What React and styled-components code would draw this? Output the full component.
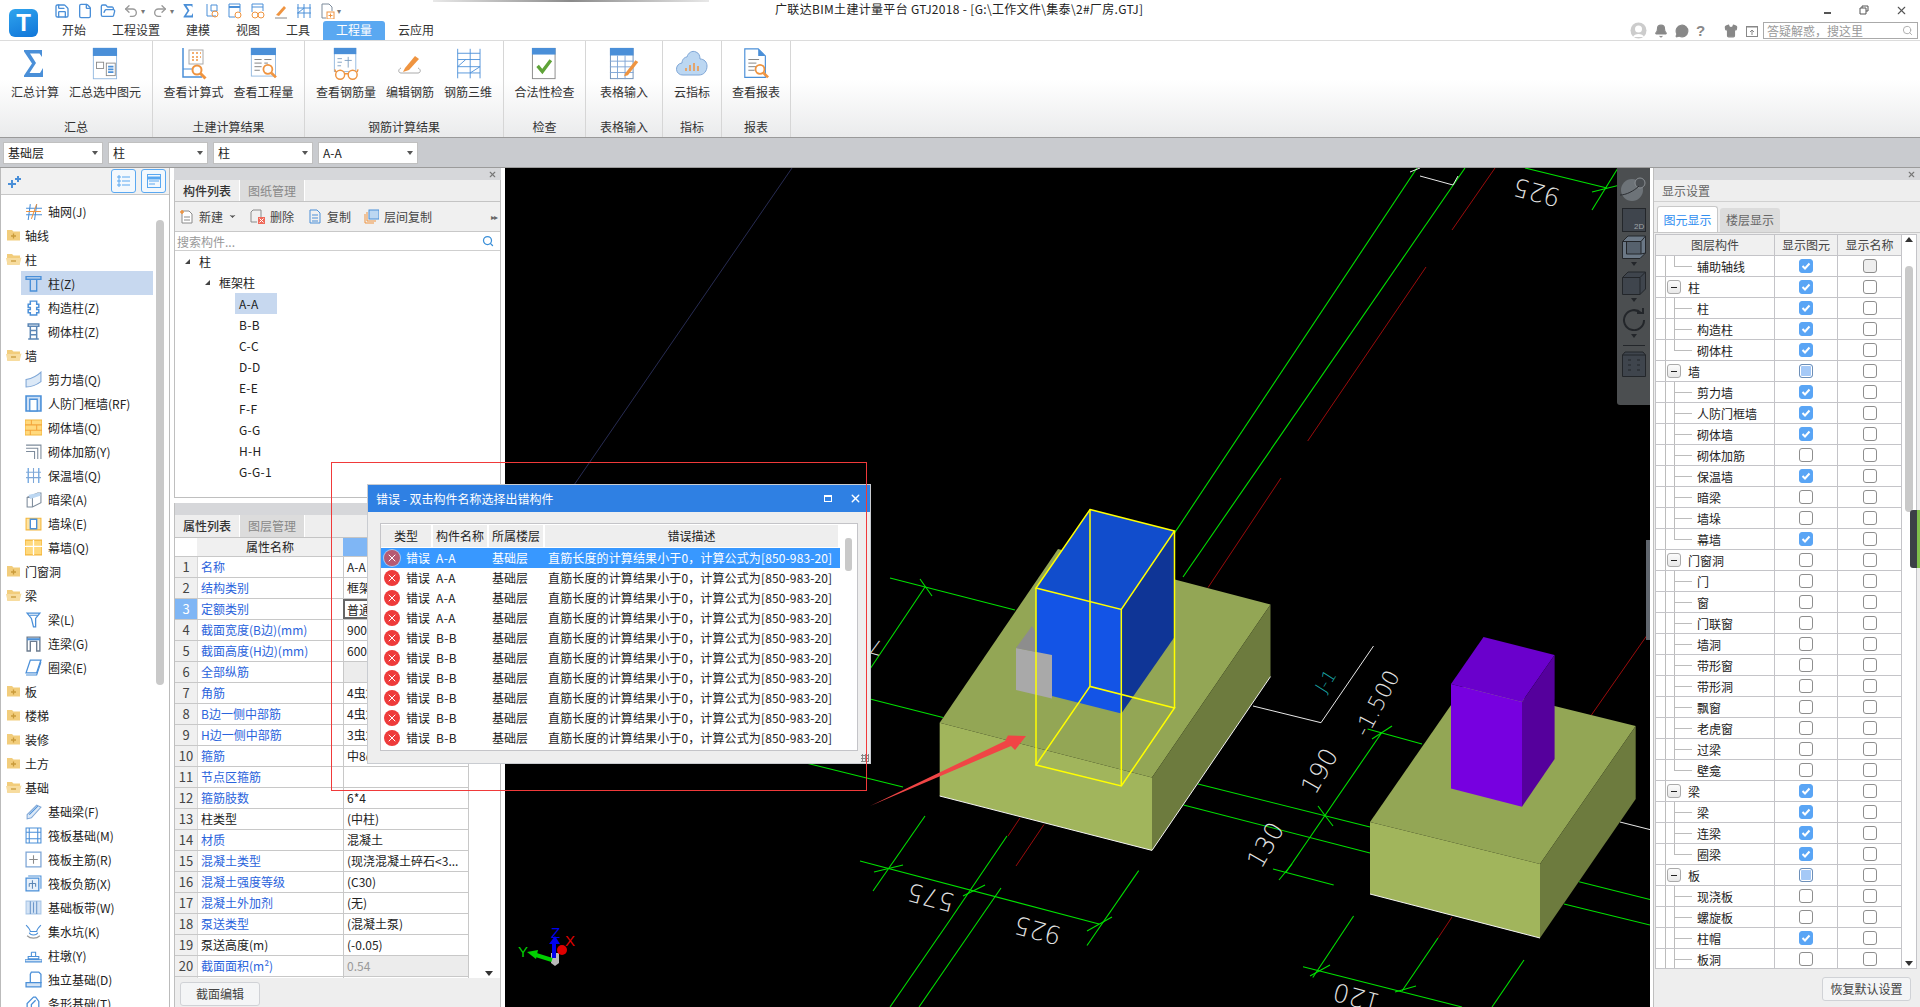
import styled, { createGlobalStyle } from "styled-components";
import {
  Save, File, FolderOpen, Undo2, Redo2, Bell, MessageCircle, Shirt, Search, X, ChevronDown,
} from "lucide-react";

const FONT = `"Noto Sans CJK SC", "Noto Sans", sans-serif`;
const BLUE = "#4a8fd8";
const ORANGE = "#ef9440";

const Global = createGlobalStyle`
  html, body { margin: 0; padding: 0; background: #fff; }
  * { box-sizing: border-box; }
`;

const Page = styled.div`
  position: relative;
  width: 1920px;
  height: 1007px;
  overflow: hidden;
  display: flex;
  flex-direction: column;
  font-family: ${FONT};
  font-size: 12px;
  color: #222;
  background: #fff;
`;
const TopShade = styled.div`
  position: absolute;
  left: 433px;
  top: 0;
  width: 276px;
  height: 2px;
  background: linear-gradient(90deg, #e8e8e8, #8a8a8a 50%, #e8e8e8);
`;

/* ---------- title bar ---------- */
const TitleBar = styled.div`
  height: 41px;
  display: flex;
  border-bottom: 1px solid #dcdcdc;
  flex-shrink: 0;
`;
const LogoBox = styled.div`
  width: 45px;
  padding: 9px 0 0 9px;
`;
const Logo = styled.div`
  width: 29px;
  height: 28px;
  border-radius: 6px;
  background: linear-gradient(160deg, #2fa4ee, #1075d8);
  color: #fff;
  font: 900 24px/28px "Liberation Sans", sans-serif;
  text-align: center;
`;
const TitleCol = styled.div`
  flex: 1;
  display: flex;
  flex-direction: column;
`;
const QatRow = styled.div`
  height: 21px;
  display: flex;
  align-items: center;
  padding-left: 9px;
  gap: 7px;
  color: ${BLUE};
`;
const QatCaret = styled.span`
  color: #777;
  font-size: 8px;
  margin-left: -5px;
`;
const TitleText = styled.div`
  position: absolute;
  top: 0;
  left: 775px;
  line-height: 18px;
  letter-spacing: 0.32px;
  white-space: nowrap;
  color: #222;
`;
const WinControls = styled.div`
  position: absolute;
  top: 0;
  right: 12px;
  display: flex;
  align-items: center;
  height: 20px;
  gap: 26px;
  color: #555;
`;
const TabRow = styled.div`
  flex: 1;
  display: flex;
  align-items: stretch;
  padding-left: 4px;
`;
const MenuTab = styled.div`
  padding: 0 13px;
  line-height: 18px;
  font-size: 12px;
  border-radius: 3px 3px 0 0;
  background: ${(p) => (p.$active ? "#5aa8f1" : "transparent")};
  color: ${(p) => (p.$active ? "#fff" : "#333")};
`;
const UserArea = styled.div`
  margin-left: auto;
  display: flex;
  align-items: center;
  gap: 7px;
  color: #999;
  padding-right: 2px;
  height: 19px;
`;
const QMark = styled.span`
  width: 7px;
  font: 700 15px/17px "Liberation Sans", sans-serif;
  color: #888;
`;
const SearchBox = styled.div`
  width: 155px;
  height: 17px;
  border: 1px solid #aaa;
  display: flex;
  align-items: center;
  justify-content: space-between;
  padding: 0 4px 0 3px;
  color: #999;
  line-height: 15px;
  margin-left: -3px;
`;

/* ---------- ribbon ---------- */
const Ribbon = styled.div`
  height: 97px;
  display: flex;
  flex-shrink: 0;
  background: linear-gradient(#fff 0%, #fff 40%, #eaebec 100%);
  border-bottom: 1px solid #9a9a9a;
`;
const RibbonGroup = styled.div`
  width: ${(p) => p.$w}px;
  display: flex;
  flex-direction: column;
  border-right: 1px solid #d6d6d6;
`;
const RibbonBtns = styled.div`
  height: 76px;
  display: flex;
  justify-content: center;
  gap: 10px;
  padding-top: 6px;
`;
const RibbonBtn = styled.div`
  display: flex;
  flex-direction: column;
  align-items: center;
  white-space: nowrap;
  color: #333;
`;
const RibbonIcon = styled.div`
  height: 34px;
  margin-bottom: 2px;
  svg { display: block; height: 34px; width: auto; }
`;
const GroupLabel = styled.div`
  text-align: center;
  line-height: 20px;
  color: #333;
`;

/* ---------- combo row ---------- */
const ComboBar = styled.div`
  height: 30px;
  flex-shrink: 0;
  display: flex;
  align-items: center;
  gap: 5px;
  padding: 0 0 0 3px;
  background: #c9cbcf;
  border-bottom: 1px solid #9b9b9b;
`;
const Combo = styled.div`
  width: 100px;
  height: 22px;
  display: flex;
  align-items: center;
  justify-content: space-between;
  padding: 0 4px;
  background: #fff;
  border: 1px solid #c0c0c0;
`;
const ComboArrow = styled.span`
  width: 0;
  height: 0;
  border-left: 3px solid transparent;
  border-right: 3px solid transparent;
  border-top: 4px solid #555;
`;

/* ---------- main area ---------- */
const Main = styled.div`
  flex: 1;
  display: flex;
  min-height: 0;
`;

/* left nav */
const NavPanel = styled.div`
  width: 170px;
  flex-shrink: 0;
  display: flex;
  flex-direction: column;
  border-left: 1px solid #bbb;
  border-right: 1px solid #bbb;
`;
const NavHeader = styled.div`
  height: 27px;
  flex-shrink: 0;
  display: flex;
  align-items: center;
  justify-content: space-between;
  background: #f1f1f1;
  border-bottom: 1px solid #c8c8c8;
  padding: 0 3px 0 6px;
`;
const NavBtnGroup = styled.div`
  display: flex;
  gap: 5px;
`;
const NavBtn = styled.div`
  width: 25px;
  height: 24px;
  border: 1px solid #5aa8f1;
  border-radius: 3px;
  background: #f3f8fd;
  display: flex;
  align-items: center;
  justify-content: center;
`;
const NavBody = styled.div`
  flex: 1;
  display: flex;
  padding-top: 4px;
  min-height: 0;
  overflow: hidden;
`;
const NavList = styled.div`
  width: 155px;
`;
const NavRow = styled.div`
  height: 24px;
  display: flex;
  align-items: center;
  white-space: nowrap;
  margin: 0 ${(p) => (p.$child ? "3px" : "0")} 0 ${(p) => (p.$child ? "20px" : "0")};
  padding-left: ${(p) => (p.$child ? "4px" : "5px")};
  gap: ${(p) => (p.$child ? "6px" : "3px")};
  background: ${(p) => (p.$selected ? "#c7d8ef" : "transparent")};
`;
const NavScroll = styled.div`
  width: 8px;
  height: 465px;
  margin-top: 21px;
  border-radius: 4px;
  background: #c9c9c9;
`;

/* middle column */
const MidCol = styled.div`
  width: 327px;
  margin: 0 4px;
  flex-shrink: 0;
  display: flex;
  flex-direction: column;
`;
const DockBar = styled.div`
  height: 12px;
  flex-shrink: 0;
  display: flex;
  align-items: center;
  justify-content: flex-end;
  padding-right: 4px;
  background: #d6d7da;
  color: #777;
`;
const PanelTop = styled.div`
  height: 318px;
  flex-shrink: 0;
  display: flex;
  flex-direction: column;
  border: 1px solid #bfbfbf;
  border-top: 0;
`;
const PanelBottom = styled.div`
  flex: 1;
  margin-top: 5px;
  min-height: 0;
  display: flex;
  flex-direction: column;
  border-left: 1px solid #bfbfbf;
  border-right: 1px solid #bfbfbf;
`;
const TabStrip = styled.div`
  height: ${(p) => p.$h || 22}px;
  flex-shrink: 0;
  display: flex;
  background: #eeeeee;
  border-bottom: 1px solid #c4c4c4;
`;
const PanelTab = styled.div`
  width: 65px;
  text-align: center;
  line-height: 21px;
  font-weight: ${(p) => (p.$active ? 500 : 400)};
  color: ${(p) => (p.$active ? "#333" : "#888")};
  background: ${(p) => (p.$active ? "#eeeeee" : "#dcdcdc")};
  border-right: 1px solid #fff;
`;
const ListToolbar = styled.div`
  height: 30px;
  flex-shrink: 0;
  display: flex;
  align-items: center;
  padding-left: 4px;
  background: #f0f0f0;
  border-bottom: 1px solid #c8c8c8;
`;
const ToolBtn = styled.div`
  display: flex;
  align-items: center;
  gap: 5px;
  margin-right: 13px;
  color: #444;
`;
const ToolMore = styled.span`
  margin-left: auto;
  margin-right: 3px;
  color: #666;
  font-size: 8px;
  letter-spacing: -1px;
`;
const SearchRow = styled.div`
  height: 19px;
  flex-shrink: 0;
  display: flex;
  align-items: center;
  justify-content: space-between;
  padding: 0 6px 0 2px;
  color: #999;
  border-bottom: 1px solid #cfcfcf;
`;
const TreeBody = styled.div`
  flex: 1;
`;
const TreeRow = styled.div`
  height: 21px;
  line-height: 21px;
  display: flex;
  align-items: center;
  padding-left: ${(p) => p.$indent}px;
`;
const TreeCaret = styled.span`
  width: 0;
  height: 0;
  margin-right: 9px;
  border-left: 5px solid transparent;
  border-bottom: 5px solid #444;
`;
const TreeLeaf = styled.span`
  padding: 0 5px 0 4px;
  min-width: 42px;
  white-space: nowrap;
  font-size: 12px;
  letter-spacing: 0.3px;
  background: ${(p) => (p.$selected ? "#c7d8ef" : "transparent")};
`;

const PropHead = styled.div`
  height: 19px;
  flex-shrink: 0;
  display: grid;
  grid-template-columns: 22px 146px 126px;
  background: #fff;
  border-bottom: 1px solid #c8c8c8;
`;
const PropHeadCell = styled.div`
  text-align: center;
  line-height: 18px;
  background: ${(p) => (p.$sel ? "#7fb6f5" : "#f0f0f0")};
  ${(p) => p.$blank && "background: #fff;"}
`;
const PropBody = styled.div`
  flex: 1;
  min-height: 0;
  overflow: hidden;
`;
const PropRow = styled.div`
  height: 21px;
  width: 294px;
  display: grid;
  grid-template-columns: 22px 146px 126px;
  border-bottom: 1px solid #c8c8c8;
`;
const PropNo = styled.div`
  text-align: center;
  line-height: 20px;
  font-size: 13px;
  background: ${(p) => (p.$sel ? "#7fb6f5" : "#f0f0f0")};
  color: ${(p) => (p.$sel ? "#fff" : "#444")};
`;
const PropName = styled.div`
  padding-left: 3px;
  line-height: 20px;
  white-space: nowrap;
  color: ${(p) => (p.$plain ? "#222" : "#2a63dc")};
  border-left: 1px solid #d8d8d8;
`;
const PropValue = styled.div`
  padding-left: 3px;
  line-height: ${(p) => (p.$sel ? "17px" : "20px")};
  white-space: nowrap;
  overflow: hidden;
  border-left: 1px solid #c8c8c8;
  border-right: 1px solid #c8c8c8;
  background: ${(p) => (p.$fill ? "#ececec" : "#fff")};
  color: ${(p) => (p.$muted ? "#999" : "#222")};
  ${(p) => p.$sel && "border: 2px solid #666; padding-left: 2px;"}
`;
const PropFoot = styled.div`
  height: 29px;
  flex-shrink: 0;
  background: #eeeeee;
  padding: 4px 0 0 5px;
`;
const GhostBtn = styled.div`
  width: ${(p) => p.$w}px;
  height: 24px;
  background: #f4f5f6;
  border: 1px solid #d0d2d6;
  border-radius: 3px;
  text-align: center;
  line-height: 22px;
  color: #444;
`;
const ScrollArrow = styled.div`
  position: absolute;
  left: ${(p) => p.$x}px;
  top: ${(p) => p.$y}px;
  width: 0;
  height: 0;
  border-left: 4px solid transparent;
  border-right: 4px solid transparent;
  ${(p) => (p.$up ? "border-bottom: 5px solid #333;" : "border-top: 5px solid #333;")}
`;

/* viewport */
const Viewport = styled.div`
  position: relative;
  flex: 1;
  min-width: 0;
  background: #000;
  svg.scene { display: block; }
`;
const FloatBar = styled.div`
  position: absolute;
  top: 0;
  right: 0;
  width: 33px;
  height: 237px;
  background: #4b4e50;
  border-radius: 0 0 0 3px;
  display: flex;
  flex-direction: column;
  align-items: center;
  padding-top: 5px;
  gap: 3px;
`;
const FloatArrow = styled.div`
  width: 0;
  height: 0;
  margin: 0 0 2px;
  border-left: 3px solid transparent;
  border-right: 3px solid transparent;
  border-top: 4px solid #23262a;
`;
const FloatRule = styled.div`
  width: 22px;
  height: 1px;
  background: #23262a;
  margin: 2px 0;
`;
const Splitter = styled.div`
  position: absolute;
  right: 0;
  top: 372px;
  width: 4px;
  height: 100px;
  background: #60666e;
`;

/* right panel */
const RightPanel = styled.div`
  width: 267px;
  flex-shrink: 0;
  margin-left: 3px;
  display: flex;
  flex-direction: column;
  background: #eeeeee;
  border-left: 1px solid #bfbfbf;
`;
const RightTitle = styled.div`
  height: 22px;
  flex-shrink: 0;
  padding-left: 8px;
  line-height: 21px;
  color: #666;
  border-bottom: 1px solid #d0d0d0;
`;
const RightTabs = styled.div`
  height: 31px;
  flex-shrink: 0;
  padding: 4px 0 0 3px;
  display: flex;
  gap: 2px;
  border-bottom: 1px solid #c8c8c8;
`;
const RightTab = styled.div`
  width: ${(p) => (p.$active ? 61 : 60)}px;
  text-align: center;
  line-height: ${(p) => (p.$active ? "26px" : "24px")};
  margin-top: ${(p) => (p.$active ? 0 : "2px")};
  border-radius: 3px 3px 0 0;
  background: ${(p) => (p.$active ? "#fff" : "#dcdcdc")};
  color: ${(p) => (p.$active ? "#2f8ef0" : "#666")};
  ${(p) => p.$active && "border: 1px solid #c8c8c8; border-bottom: 0;"}
`;
const LayerBox = styled.div`
  height: 735px;
  flex-shrink: 0;
  margin: 1px 3px 0 1px;
  background: #fff;
  border: 1px solid #c4c4c8;
  display: flex;
  overflow: hidden;
`;
const LayerTable = styled.div`
  width: 246px;
  flex-shrink: 0;
`;
const LayerHead = styled.div`
  height: 21px;
  display: grid;
  grid-template-columns: 119px 63px 64px;
  background: #f0f0f0;
  border-bottom: 1px solid #c4c4c8;
`;
const LayerHeadCell = styled.div`
  text-align: center;
  line-height: 20px;
  color: #444;
  border-right: 1px solid #c4c4c8;
`;
const LayerRow = styled.div`
  height: 21px;
  display: grid;
  grid-template-columns: 119px 63px 64px;
  border-bottom: 1px solid #c4c4c8;
`;
const lines = (p) => {
  const c = "#bcbcbc";
  const g = `linear-gradient(${c},${c})`;
  const outer = `${g} 9px 0/1px 100% no-repeat`;
  if (p.$group) return `${outer}`;
  const inner = `${g} 18px 0/1px ${p.$last ? "10px" : "100%"} no-repeat`;
  const arm = `${g} 18px 10px/18px 1px no-repeat`;
  return `${outer}, ${inner}, ${arm}`;
};
const LayerName = styled.div`
  display: flex;
  align-items: center;
  padding-left: ${(p) => (p.$group ? "11px" : "41px")};
  gap: 7px;
  background: ${lines};
  color: #222;
  border-right: 1px solid #c4c4c8;
`;
const Minus = styled.span`
  width: 14px;
  height: 14px;
  border: 1px solid #aaa;
  border-radius: 3px;
  background: linear-gradient(#fbfbfb, #e8e8e8);
  display: flex;
  align-items: center;
  justify-content: center;
  &::before { content: ""; width: 6px; height: 1px; background: #222; }
`;
const CheckCell = styled.div`
  display: flex;
  align-items: center;
  justify-content: center;
  border-right: 1px solid #c4c4c8;
`;
const Check = styled.span`
  width: 14px;
  height: 14px;
  border-radius: 3px;
  display: flex;
  align-items: center;
  justify-content: center;
  border: 1px solid ${(p) => (p.$state === "on" ? "#5aa5f5" : "#8e8e8e")};
  background: ${(p) => (p.$state === "on" ? "#5aa5f5" : p.$state === "off-dim" ? "#eeeeee" : "#fff")};
  ${(p) => p.$state === "part" && "box-shadow: inset 0 0 0 1px #fff; background: #a5c9f7; border-color: #6d8fb8;"}
`;
const LayerScroll = styled.div`
  flex: 1;
  position: relative;
`;
const LayerThumb = styled.div`
  width: 8px;
  height: 246px;
  margin: 31px 0 0 3px;
  border-radius: 4px;
  background: #c9c9c9;
`;
const RightFoot = styled.div`
  flex: 1;
  display: flex;
  justify-content: flex-end;
  padding: 8px 9px 0 0;
`;
const Meter = styled.div`
  position: absolute;
  right: 0;
  top: 510px;
  width: 10px;
  height: 58px;
  background: #3c4046;
  border-radius: 3px 0 0 3px;
  border-right: 3px solid #7fbf4a;
`;

/* error dialog */
const Dialog = styled.div`
  position: absolute;
  left: 368px;
  top: 485px;
  width: 502px;
  height: 278px;
  background: #eeeeee;
  box-shadow: 0 0 0 1px #c9ccd1;
  display: flex;
  flex-direction: column;
`;
const DialogTitle = styled.div`
  height: 27px;
  flex-shrink: 0;
  display: flex;
  align-items: center;
  justify-content: space-between;
  padding: 0 8px;
  background: #2f80e3;
  color: #fff;
`;
const DialogActions = styled.div`
  display: flex;
  align-items: center;
  gap: 17px;
`;
const Maxi = styled.span`
  width: 8px;
  height: 7px;
  border: 1px solid #fff;
  border-top-width: 2px;
`;
const ErrorBox = styled.div`
  margin: 11px 12px 0;
  height: 228px;
  background: #fff;
  border: 1px solid #c4c4c8;
  display: flex;
`;
const ErrorTable = styled.div`
  width: 459px;
  flex-shrink: 0;
`;
const ErrorGrid = styled.div`
  display: grid;
  grid-template-columns: 52px 56px 56px 295px;
`;
const ErrorHead = styled(ErrorGrid)`
  height: 24px;
  padding: 1px 0 1px;
`;
const ErrorHeadCell = styled.div`
  background: #eeeeee;
  margin-right: 2px;
  text-align: center;
  line-height: 22px;
  color: #222;
`;
const ErrorRow = styled(ErrorGrid)`
  height: 20px;
  line-height: 20px;
  white-space: nowrap;
  background: ${(p) => (p.$selected ? "#3898ff" : "#fff")};
  color: ${(p) => (p.$selected ? "#fff" : "#222")};
`;
const ErrType = styled.div`
  display: flex;
  align-items: center;
  gap: 6px;
  padding-left: 3px;
`;
const ErrDot = styled.span`
  width: 16px;
  height: 16px;
  border-radius: 50%;
  flex-shrink: 0;
  display: flex;
  align-items: center;
  justify-content: center;
  color: #fff;
  background: ${(p) => (p.$selected ? "#b65a72" : "#ee3b3b")};
  ${(p) => p.$selected && "box-shadow: 0 0 0 1px #a8c8ee;"}
`;
const ErrName = styled.div`
  padding-left: 3px;
  letter-spacing: 0.4px;
`;
const ErrFloor = styled.div`
  padding-left: 3px;
`;
const ErrDesc = styled.div`
  padding-left: 3px;
  letter-spacing: 0.13px;
`;
const ErrScroll = styled.div`
  flex: 1;
  padding: 14px 0 0 5px;
`;
const ErrThumb = styled.div`
  width: 7px;
  height: 33px;
  border-radius: 3px;
  background: #c9c9c9;
`;
const Grip = styled.div`
  position: absolute;
  right: 1px;
  bottom: 1px;
  width: 8px;
  height: 8px;
  background: radial-gradient(circle, #888 1px, transparent 1.2px) 0 0 / 3px 3px;
`;
const RedFrame = styled.div`
  position: absolute;
  left: 331px;
  top: 462px;
  width: 536px;
  height: 329px;
  border: 1px solid #f03a3a;
  pointer-events: none;
`;

/* ---------- icons ---------- */
const Svg = ({ s = 16, w, h, vb, sw = 1, stroke = BLUE, children, className }) => (
  <svg
    className={className}
    width={w || s}
    height={h || s}
    viewBox={vb || `0 0 ${w || s} ${h || s}`}
    fill="none"
    stroke={stroke}
    strokeWidth={sw}
  >
    {children}
  </svg>
);

const SigmaPath = ({ c = BLUE }) => <path d="M3 2H21V9L18.5 5.5H9L15 15L8.5 25H19L22 20V29H3V27.5L11 15.5L3 3.5Z" fill={c} stroke="none" />;

const Mag = ({ x, y, r = 5, c = ORANGE }) => (
  <g stroke={c} strokeWidth="2" fill="none">
    <circle cx={x} cy={y} r={r} />
    <path d={`M${x + r - 1} ${y + r - 1}l5 5`} strokeWidth="3" />
  </g>
);

const Rib = {
  sigma: () => <Svg w={28} h={34} vb="0 -1 28 34"><SigmaPath /></Svg>,
  select: () => (
    <Svg w={30} h={38} vb="0 0 30 38">
      <rect x="1.5" y="1.5" width="26" height="34" fill="#fff" stroke="#8fb6de" />
      <rect x="1" y="1" width="27" height="9" fill={BLUE} stroke="none" />
      <rect x="5" y="17" width="8" height="7" stroke="#888" />
      <rect x="16" y="18" width="10" height="14" fill="#fff" stroke="#888" />
      <path d="M18 22h6M18 25h6M18 28h6" stroke="#4a8fd8" strokeWidth="2" />
    </Svg>
  ),
  formula: () => (
    <Svg w={30} h={34} vb="0 0 30 34">
      <path d="M5 1V30H24" stroke={BLUE} strokeWidth="1.5" />
      <path d="M5 22H15" stroke={BLUE} />
      <rect x="11" y="3" width="14" height="14" stroke="#aaa" />
      <path d="M14 6h2M18 6h2M22 6h1M14 10h2M18 10h2M22 10h1M14 13h2M18 13h2" stroke={ORANGE} strokeWidth="1.5" />
      <Mag x={19} y={23} r={4.5} />
    </Svg>
  ),
  qty: () => (
    <Svg w={30} h={38} vb="0 0 30 38">
      <rect x="1.5" y="1.5" width="27" height="31" fill="#fff" stroke="#8fb6de" />
      <rect x="1" y="1" width="28" height="8" fill={BLUE} stroke="none" />
      <path d="M5 14h8M5 18h8M5 22h8M5 26h6M16 14h8M16 18h4" stroke="#777" />
      <Mag x={20} y={25} r={5} />
    </Svg>
  ),
  rebar: () => (
    <Svg w={30} h={38} vb="0 0 30 38">
      <rect x="1.5" y="1.5" width="24" height="26" fill="#fff" stroke="#8fb6de" />
      <rect x="1" y="1" width="25" height="7" fill={BLUE} stroke="none" />
      <path d="M5 13h5M5 17h5M5 21h4M17 11V23M13 15H21" stroke="#7b9cbf" />
      <g stroke={ORANGE} strokeWidth="1.6">
        <circle cx="8" cy="31" r="5" fill="#fff" />
        <circle cx="22" cy="31" r="5" fill="#fff" />
        <path d="M13 30h4M2 25l1 3M28 25l-1 3" />
      </g>
    </Svg>
  ),
  edit: () => (
    <Svg w={30} h={34} vb="0 0 30 34">
      <path d="M6 21c-3 1-3 5 0 5h17c3 0 3-4 0-5" stroke="#aaa" />
      <path d="M10 21l10-12 4 3-10 11-6 2z" fill={ORANGE} stroke="none" />
    </Svg>
  ),
  frame: () => (
    <Svg w={30} h={38} vb="0 0 30 38" stroke={BLUE}>
      <path d="M3 2V35M17 2V35M28 2V35M3 7H28M3 14H28M3 22H28M3 29H28M3 22L12 14M17 29L28 22" />
    </Svg>
  ),
  check: () => (
    <Svg w={28} h={36} vb="0 0 28 36">
      <rect x="1.5" y="1.5" width="24" height="32" fill="#fff" stroke="#8a8a8a" />
      <rect x="1" y="1" width="25" height="7" fill={BLUE} stroke="none" />
      <path d="M7 20l5 6 9-12" stroke="#5fa338" strokeWidth="3.5" />
    </Svg>
  ),
  table: () => (
    <Svg w={32} h={36} vb="0 0 32 36">
      <rect x="1.5" y="1.5" width="24" height="32" fill="#fff" stroke="#6d8fb8" />
      <rect x="1" y="1" width="25" height="8" fill={BLUE} stroke="none" />
      <path d="M1 15H26M1 21H26M1 27H26M9 9V34M17 9V34" stroke="#7fa6d6" />
      <path d="M17 28l11-14 3 2-11 14-4 1z" fill={ORANGE} stroke="none" />
    </Svg>
  ),
  cloud: () => (
    <Svg w={34} h={34} vb="0 0 34 34">
      <path d="M8 28a6 6 0 0 1-1-12c0-4 3-6 5-6 1-4 5-7 9-5 3 1 4 4 4 7 4 0 7 3 7 7 0 5-3 9-8 9z" fill="#bcd7f2" stroke="#7fa6d6" />
      <path d="M11 24v-3M15 24v-6M19 24v-8M23 24v-5" stroke={ORANGE} strokeWidth="1.5" />
    </Svg>
  ),
  report: () => (
    <Svg w={30} h={38} vb="0 0 30 38">
      <path d="M2 2H17L25 10V34H2Z" fill="#fff" stroke={BLUE} strokeWidth="1.3" />
      <path d="M17 2V10H25Z" fill={BLUE} stroke="none" />
      <path d="M6 14h12M6 18h9M6 22h9M6 26h7" stroke="#777" />
      <Mag x={19} y={25} r={5} />
    </Svg>
  ),
};

const p = (d, c, sw = 1, f = "none") => <path d={d} stroke={c} strokeWidth={sw} fill={f} />;
const NAV_ICONS = {
  grid: <>{p("M1 5H16M1 11H16M5 1L3 16M11 1L9 16", BLUE)}{p("M1 8H15M11 1L6 15", ORANGE)}</>,
  column: <>{p("M1 1.5H15V4H1ZM5 4V15H11V4", BLUE, 1.3)}</>,
  gz: <>{p("M5 2H11V5H13V8H11V10H13V13H11V15H5V13H3V10H5V8H3V5H5Z", BLUE, 1.4)}</>,
  brickcol: <>{p("M3 1H13V3H3ZM5 3V15H11V3M5 7H11M5 11H11M3 15H13", "#5b86b5", 1.4)}</>,
  shear: <>{p("M1 8C6 7 11 5 15 1V10C11 13 6 15 1 15Z", "#7ea6d6", 1, "#dce9f7")}</>,
  door: <>{p("M1 1H15V15H1Z", BLUE, 1.5, "#cfe1f6")}{p("M4.5 4H11.5V15H4.5Z", BLUE, 1.2, "#fff")}</>,
  brick: <>{p("M0 1H16V15H0Z", "#f4b63b", 1, "#ffd97d")}{p("M0 5.5H16M0 10.5H16M6 1V5.5M11 5.5V10.5M5 10.5V15", "#f4a53b")}</>,
  rebar: <>{p("M1 2H15V15M1 5H12V15M1 8H9V15", "#7d8b9b")}</>,
  insu: <>{p("M3 1V15M13 1V15", BLUE)}{p("M8 1V15M1 5H15M1 10H15", "#7ea6d6", 1)}</>,
  hidden: <>{p("M2 6L12 2H15V11L7 15H2Z", "#7d8b9b")}{p("M2 6H7V15M7 6L15 2", "#7d8b9b")}{p("M4 4L14 2V4L5 7Z", "#bcd7f2", 1, "#bcd7f2")}</>,
  pier: <>{p("M1 3H15V14H1Z", "#f4b63b", 1, "#ffe4a3")}{p("M5 4H11V13H5Z", BLUE, 1.3, "#fff")}</>,
  curtain: <>{p("M0 1H16V15H0Z", "#f4b63b", 1.2, "#ffd97d")}{p("M0 7H16M8 1V15", "#fff", 1.2)}</>,
  beam: <>{p("M2 2H14L10 7V15H8L6 7Z", BLUE, 1.2)}{p("M4 4H12", BLUE)}</>,
  link: <>{p("M2 2H14V15H11V6H5V15H2Z", "#6d7d90", 1.3)}{p("M2 4H14", BLUE, 2)}</>,
  ring: <>{p("M5 1H15L11 13H1Z", BLUE, 1.2)}{p("M1 15H11L15 3", BLUE)}</>,
  fbeam: <>{p("M2 11L11 2L15 4L6 14L2 15Z", "#7ea6d6", 1, "#dce9f7")}{p("M4 11L12 3", BLUE)}</>,
  raft: <>{p("M1 1H15V15H1Z", BLUE)}{p("M4 1V15M12 1V15M1 5H15M1 11H15", BLUE)}</>,
  raftmain: <>{p("M1 1H15V15H1Z", "#7ea6d6", 1.2)}{p("M8 4V12M4 8H12", "#8a8a8a")}</>,
  raftneg: <>{p("M1 3H13V15H1Z", BLUE, 1.2, "#e7f0fa")}{p("M3 1H15V13", BLUE)}{p("M7 5V13M4 8H10M4 8V11M10 8V11", "#5b86b5")}</>,
  strip: <>{p("M1 2H15V14H1Z", "#aac7e8", 1, "#d3e3f5")}{p("M5 2V14M11 2V14M8 3V13", "#6c97c9", 1)}</>,
  pit: <>{p("M1 2C3 4 5 6 5 8H11C11 6 13 4 15 2M4 9C5 12 11 12 12 9", BLUE)}{p("M2 12C5 15 11 15 14 12", "#999")}</>,
  cap: <>{p("M6 5H10V9M6 5V9M3 9H13V11H3ZM0 12H16V14H0Z", BLUE, 1)}</>,
  iso: <>{p("M6 1H13L15 3V11H5V3Z", BLUE, 1.2)}{p("M1 11H15V15H1Z", BLUE, 1.2, "#d3e3f5")}</>,
  strip2: <>{p("M2 15V8L8 2H10L13 6V15ZM6 15V9L10 5", BLUE, 1.2)}</>,
};
const NavIcon = ({ name }) => <Svg s={17} vb="0 0 16 16">{NAV_ICONS[name]}</Svg>;
const Folder = ({ open }) => (
  <Svg s={16} vb="0 0 16 16" stroke="none">
    <path d="M1 3H6L7.5 4.5H14V13.5H1Z" fill="#f2cd7c" />
    {open ? <path d="M0 7H13L15.5 6.5L13.5 14H1.5Z" fill="#f7dc9f" /> : null}
    <path d={open ? "M5 10h5" : "M5 9h5M7.5 6.5v5"} stroke="#c99a3a" strokeWidth="1.3" />
  </Svg>
);

/* ---------- scene ---------- */
const GREEN = [
  [1417, 168, 1130, 600], [1465, 168, 1183, 577],
  [925, 587, 870, 669], [890, 578, 1015, 610], [870, 699, 943, 717.5],
  [806, 763, 903, 787], [1525, 168, 1607, 188], [1592, 192, 1620, 185], [1618, 168, 1592, 210],
  [925, 816, 873, 891], [860, 861, 1099, 924], [874, 872, 903, 865], [950, 920, 890, 1007], [1001, 888, 919, 1007],
  [1007, 836, 950, 920], [1138.7, 870.6, 1087, 945.5], [1087, 931, 1112, 917],
  [963, 896, 985, 885], [1367.6, 729, 1422, 744], [1381.5, 733, 1285.5, 873],
  [1372, 739, 1392, 726], [1198, 784, 1370, 827], [1183.5, 805, 1370, 853], [1273, 869, 1333.7, 885],
  [1325, 815.5, 1318, 806], [1325, 815.5, 1333, 826], [1279, 880, 1292, 864],
  [1579, 881.7, 1650, 899.5], [1564, 904, 1650, 925],
  [1303, 966.7, 1462, 1007], [1353.6, 916, 1312.8, 977.5], [1438, 938, 1402, 991],
  [1524, 960, 1492, 1007], [1310, 976, 1330, 965], [1395, 992, 1416, 986],
  [920, 579, 932, 596],
];
const RED = [
  [1495, 168, 1452, 230], [1426, 267, 1307.7, 441], [1281, 478, 1208, 587.6],
  [1020, 818, 1008, 836], [1044, 824.5, 1016, 866], [1452, 917, 1438, 938], [1591.4, 715, 1650, 631],
];
const WHITE = [
  [1253, 706, 1321, 722.7], [1321, 722.7, 1373.5, 646], [1620, 822, 1650, 829.6],
  [1420, 176, 1453, 185], [1453, 185, 1458, 176], [1410, 172, 1420, 168],
];
const pts = (a) => a.map((v) => v.join(",")).join(" ");

const DimText = styled.text`
  font-family: "DejaVu Sans", sans-serif;
  font-weight: 200;
  font-size: ${(p) => p.$size || 25}px;
  fill: ${(p) => p.$color || "#e4e4e4"};
`;

const Footing = ({ top, front, side }) => (
  <g>
    <polygon points={pts(top)} fill="#93a655" />
    <polygon points={pts(front)} fill="#a1b55c" />
    <polygon points={pts(side)} fill="#6d7b3e" />
  </g>
);

const Scene = () => (
  <svg className="scene" width="1145" height="839" viewBox="505 168 1145 839">
    <line x1="792" y1="168" x2="574" y2="485" stroke="#272b52" />
    {GREEN.map((l, i) => <line key={i} x1={l[0]} y1={l[1]} x2={l[2]} y2={l[3]} stroke="#00e000" strokeWidth="1.1" />)}
    {RED.map((l, i) => <line key={i} x1={l[0]} y1={l[1]} x2={l[2]} y2={l[3]} stroke="#9a0c0c" />)}
    {WHITE.map((l, i) => <line key={i} x1={l[0]} y1={l[1]} x2={l[2]} y2={l[3]} stroke="#e8e8e8" />)}

    <Footing
      top={[[1058, 549], [1270.5, 604.4], [1152, 777.5], [939.7, 722.7]]}
      front={[[939.7, 722.7], [1152, 777.5], [1152, 850.4], [939.7, 796]]}
      side={[[1152, 777.5], [1270.5, 604.4], [1270.5, 676.6], [1152, 850.4]]}
    />
    <polyline points="939.7,796 1152,850.4 1270.5,676.6" fill="none" stroke="#f4f4f4" />
    <polygon points="1090,509.6 1174.5,531 1121.3,609.4 1036,588" fill="#114dcc" />
    <polygon points="1036,588 1121.3,609.4 1121.3,713.6 1036,692" fill="#1354e6" />
    <polygon points="1121.3,609.4 1174.5,531 1174.5,637 1121.3,713.6" fill="#0f3596" />
    <polygon points="1016,648 1052,655 1052,698.5 1016,690" fill="#a9a9a9" />
    <polygon points="1016,648 1032,626 1036,633 1036,652" fill="#8d8d8d" />
    <g fill="none" stroke="#ffff00" strokeWidth="1.5">
      <polygon points="1090,509.6 1174.5,531 1121.3,609.4 1036,588" />
      <polygon points="1036,765 1121.3,786 1174.5,708 1090,686.4" />
      <path d="M1036 588V765M1121.3 609.4V786M1174.5 531V708M1090 509.6V686.4" />
    </g>

    <Footing
      top={[[1465.6, 684], [1635.7, 726], [1540, 864], [1370, 822]]}
      front={[[1370, 822], [1540, 864], [1540, 938], [1370, 894]]}
      side={[[1540, 864], [1635.7, 726], [1635.7, 799], [1540, 938]]}
    />
    <polyline points="1370,894 1540,938" fill="none" stroke="#f4f4f4" />
    <polygon points="1483.5,637 1554.6,655 1522,702 1451,684" fill="#6a00cc" />
    <polygon points="1451,684 1522,702 1522,806.7 1451,788.6" fill="#7700e0" />
    <polygon points="1522,702 1554.6,655 1554.6,759 1522,806.7" fill="#55009c" />

    <polygon points="870,806 1005,741 1008,735.5 1026,736 1015,750 1011,746" fill="#f04545" />

    <DimText transform="translate(1562 190) rotate(195)">925</DimText>
    <DimText transform="translate(956 895) rotate(195)">575</DimText>
    <DimText transform="translate(1063 928) rotate(195)">925</DimText>
    <DimText transform="translate(1382 995) rotate(195)">120</DimText>
    <DimText transform="translate(1315 796) rotate(-60)">190</DimText>
    <DimText transform="translate(1261 870) rotate(-60)">130</DimText>
    <DimText $size={22} transform="translate(1367 738) rotate(-62)">-1.500</DimText>
    <DimText $size={18} $color="#1aa7a7" transform="translate(1325 694) rotate(-58)">J-1</DimText>
    <DimText $size={20} transform="translate(884 642) rotate(195)">7</DimText>

    <g fontFamily="Liberation Sans, sans-serif" fontSize="15">
      <polygon points="551,953 559,953 559,963 555,966 551,963" fill="#b9b9b9" />
      <path d="M554 958V942" stroke="#0000ee" strokeWidth="4" />
      <polygon points="549,944 555,936 560,944" fill="#0000ee" />
      <path d="M552 960L536 955" stroke="#00d000" strokeWidth="4" />
      <polygon points="538,950 527,952 536,959" fill="#00d000" />
      <circle cx="562" cy="950" r="5" fill="#e00000" />
      <text x="551" y="938" fill="#0000ee">Z</text>
      <text x="565" y="946" fill="#e00000">X</text>
      <text x="518" y="957" fill="#00d000">Y</text>
    </g>
  </svg>
);

/* ---------- data ---------- */
const NAV = [
  ["轴网(J)", "grid"], ["轴线", "c"], ["柱", "o"], ["柱(Z)", "column", true], ["构造柱(Z)", "gz"],
  ["砌体柱(Z)", "brickcol"], ["墙", "o"], ["剪力墙(Q)", "shear"], ["人防门框墙(RF)", "door"], ["砌体墙(Q)", "brick"],
  ["砌体加筋(Y)", "rebar"], ["保温墙(Q)", "insu"], ["暗梁(A)", "hidden"], ["墙垛(E)", "pier"], ["幕墙(Q)", "curtain"],
  ["门窗洞", "c"], ["梁", "o"], ["梁(L)", "beam"], ["连梁(G)", "link"], ["圈梁(E)", "ring"], ["板", "c"], ["楼梯", "c"],
  ["装修", "c"], ["土方", "c"], ["基础", "o"], ["基础梁(F)", "fbeam"], ["筏板基础(M)", "raft"], ["筏板主筋(R)", "raftmain"],
  ["筏板负筋(X)", "raftneg"], ["基础板带(W)", "strip"], ["集水坑(K)", "pit"], ["柱墩(Y)", "cap"], ["独立基础(D)", "iso"],
  ["条形基础(T)", "strip2"],
];

const PROPS = [
  ["名称", "A-A"], ["结构类别", "框架柱"], ["定额类别", "普通柱", { sel: true }], ["截面宽度(B边)(mm)", "900"],
  ["截面高度(H边)(mm)", "600"], ["全部纵筋", "", { fill: true }], ["角筋", "4虫25"], ["B边一侧中部筋", "4虫22"],
  ["H边一侧中部筋", "3虫22"], ["箍筋", "中8@100"], ["节点区箍筋", ""], ["箍筋肢数", "6*4"],
  ["柱类型", "(中柱)", { plain: true }], ["材质", "混凝土"], ["混凝土类型", "(现浇混凝土碎石<3..."], ["混凝土强度等级", "(C30)"],
  ["混凝土外加剂", "(无)"], ["泵送类型", "(混凝土泵)"], ["泵送高度(m)", "(-0.05)", { plain: true }],
  ["截面面积(m²)", "0.54", { fill: true, muted: true }], ["", ""],
];

// [name, group?, state, last child?, name box state]
const LAYERS = [
  ["辅助轴线", 0, "on", 1, "off-dim"], ["柱", 1, "on"], ["柱", 0, "on"], ["构造柱", 0, "on"], ["砌体柱", 0, "on", 1],
  ["墙", 1, "part"], ["剪力墙", 0, "on"], ["人防门框墙", 0, "on"], ["砌体墙", 0, "on"], ["砌体加筋", 0, "off"],
  ["保温墙", 0, "on"], ["暗梁", 0, "off"], ["墙垛", 0, "off"], ["幕墙", 0, "on", 1],
  ["门窗洞", 1, "off"], ["门", 0, "off"], ["窗", 0, "off"], ["门联窗", 0, "off"], ["墙洞", 0, "off"], ["带形窗", 0, "off"],
  ["带形洞", 0, "off"], ["飘窗", 0, "off"], ["老虎窗", 0, "off"], ["过梁", 0, "off"], ["壁龛", 0, "off", 1],
  ["梁", 1, "on"], ["梁", 0, "on"], ["连梁", 0, "on"], ["圈梁", 0, "on", 1],
  ["板", 1, "part"], ["现浇板", 0, "off"], ["螺旋板", 0, "off"], ["柱帽", 0, "on"], ["板洞", 0, "off"],
];

const ERRORS = ["A-A", "A-A", "A-A", "A-A", "B-B", "B-B", "B-B", "B-B", "B-B", "B-B"];
const RIBBON = [
  [153, "汇总", [["汇总计算", "sigma"], ["汇总选中图元", "select"]]],
  [152, "土建计算结果", [["查看计算式", "formula"], ["查看工程量", "qty"]]],
  [199, "钢筋计算结果", [["查看钢筋量", "rebar"], ["编辑钢筋", "edit"], ["钢筋三维", "frame"]]],
  [82, "检查", [["合法性检查", "check"]]],
  [77, "表格输入", [["表格输入", "table"]]],
  [59, "指标", [["云指标", "cloud"]]],
  [69, "报表", [["查看报表", "report"]]],
];

const CheckMark = () => (
  <Svg s={10} vb="0 0 10 10" stroke="#fff" sw={2}><path d="M1.5 5L4 7.5L8.5 2.5" /></Svg>
);

const App = () => (
  <Page>
    <Global />
    <TopShade />
    <TitleBar>
      <LogoBox><Logo>T</Logo></LogoBox>
      <TitleCol>
        <QatRow>
          <Save size={16} />
          <File size={16} />
          <FolderOpen size={16} />
          <Undo2 size={16} color="#999" />
          <QatCaret>▾</QatCaret>
          <Redo2 size={16} color="#999" />
          <QatCaret>▾</QatCaret>
          <Svg w={16} h={16} vb="0 0 28 32"><SigmaPath /></Svg>
          <Svg s={16}><path d="M3 1V13H12M7 2H13V8H7Z" /><circle cx="11" cy="11" r="3" stroke={ORANGE} /></Svg>
          <Svg s={16}><path d="M2 1H13V9M2 1V14H8" /><path d="M2 4H13" strokeWidth="2" /><circle cx="11" cy="12" r="3" stroke={ORANGE} /></Svg>
          <Svg s={16}><path d="M2 1H13V8M2 1V9M2 4H13" /><circle cx="5" cy="12" r="3" stroke={ORANGE} /><circle cx="11" cy="12" r="3" stroke={ORANGE} /></Svg>
          <Svg s={16}><path d="M3 12L11 3L13 5L6 13Z" fill={ORANGE} stroke="none" /><path d="M2 15H14" stroke="#888" /></Svg>
          <Svg s={16}><path d="M2 1V15M8 1V15M14 1V15M1 5H15M1 10H15M2 10L8 5" /></Svg>
          <Svg s={16}><path d="M3 1H10L13 4V8M3 1V15H7" stroke="#7d8b9b" /><rect x="8" y="9" width="7" height="7" fill="#fff" stroke={ORANGE} /><path d="M11.5 10.5V14.5M9.5 12.5H13.5" stroke={ORANGE} /></Svg>
          <QatCaret>▾</QatCaret>
        </QatRow>
        <TabRow>
          {["开始", "工程设置", "建模", "视图", "工具"].map((t) => <MenuTab key={t}>{t}</MenuTab>)}
          <MenuTab $active>工程量</MenuTab>
          <MenuTab>云应用</MenuTab>
          <UserArea>
            <Svg s={17} stroke="none"><circle cx="8.5" cy="8.5" r="8" fill="#ccc" /><circle cx="8.5" cy="7" r="3.5" fill="#fff" /><path d="M3 15c1-4 10-4 11 0" fill="#fff" /></Svg>
            <Bell size={14} fill="#888" color="#888" />
            <MessageCircle size={14} fill="#888" color="#888" />
            <QMark>?</QMark>
            <Shirt size={14} fill="#888" color="#888" style={{ marginLeft: 14 }} />
            <Svg s={14} stroke="#888"><rect x="1.5" y="2.5" width="11" height="10" /><path d="M7 11V6M5 8l2-2 2 2M1 3H13" /></Svg>
            <SearchBox>
              <span>答疑解惑，搜这里</span>
              <Search size={11} color="#aaa" />
            </SearchBox>
          </UserArea>
        </TabRow>
      </TitleCol>
      <TitleText>广联达BIM土建计量平台 GTJ2018 - [G:\工作文件\集泰\2#厂房.GTJ]</TitleText>
      <WinControls>
        <Svg s={10} stroke="#555"><path d="M1 8H8" strokeWidth="2" /></Svg>
        <Svg s={10} stroke="#555"><path d="M3 3V1H9V6H7M1 3H7V9H1Z" /></Svg>
        <X size={13} />
      </WinControls>
    </TitleBar>

    <Ribbon>
      {RIBBON.map(([w, label, btns]) => (
        <RibbonGroup key={label} $w={w}>
          <RibbonBtns>
            {btns.map(([t, ic]) => {
              const I = Rib[ic];
              return <RibbonBtn key={t}><RibbonIcon><I /></RibbonIcon>{t}</RibbonBtn>;
            })}
          </RibbonBtns>
          <GroupLabel>{label}</GroupLabel>
        </RibbonGroup>
      ))}
    </Ribbon>

    <ComboBar>
      {["基础层", "柱", "柱", "A-A"].map((c, i) => (
        <Combo key={i}>{c}<ComboArrow /></Combo>
      ))}
    </ComboBar>

    <Main>
      <NavPanel>
        <NavHeader>
          <Svg s={14} stroke="none"><path d="M1 9h3V6h2v3h3v2H6v3H4v-3H1zM8 4h2V2h2v2h2v2h-2v2h-2V6H8z" fill={BLUE} /></Svg>
          <NavBtnGroup>
            <NavBtn><Svg s={14} stroke="#5aa8f1"><path d="M1 2h2v2H1zM1 6h2v2H1zM1 10h2v2H1zM5 3h8M5 7h8M5 11h8" /></Svg></NavBtn>
            <NavBtn><Svg s={16} stroke="#5aa8f1"><rect x="1.5" y="1.5" width="13" height="13" /><path d="M1 5h14" strokeWidth="3" /><path d="M3 8h10M3 11h6" /></Svg></NavBtn>
          </NavBtnGroup>
        </NavHeader>
        <NavBody>
          <NavList>
            {NAV.map(([t, ic, sel]) => {
              const folder = ic === "c" || ic === "o";
              return (
                <NavRow key={t} $child={!folder} $selected={sel}>
                  {folder ? <Folder open={ic === "o"} /> : <NavIcon name={ic} />}
                  {t}
                </NavRow>
              );
            })}
          </NavList>
          <NavScroll />
        </NavBody>
      </NavPanel>

      <MidCol>
        <DockBar><X size={9} strokeWidth={3} /></DockBar>
        <PanelTop>
          <TabStrip>
            <PanelTab $active>构件列表</PanelTab>
            <PanelTab>图纸管理</PanelTab>
          </TabStrip>
          <ListToolbar>
            <ToolBtn>
              <Svg s={15} stroke="#8a8a8a"><path d="M3 2H10L13 5V14H3Z" fill="#fff" /><path d="M5 8h6M5 11h6" /><path d="M1 3h4M3 1v4" stroke={ORANGE} strokeWidth="1.5" /></Svg>
              新建
              <ChevronDown size={9} color="#555" fill="#555" />
            </ToolBtn>
            <ToolBtn>
              <Svg s={15} stroke="#8a8a8a"><path d="M3 1H11V8M1 3V13H7M3 1L1 3" /><rect x="8" y="8" width="7" height="7" fill="#ef6a5a" stroke="none" /><path d="M9.5 9.5l4 4M13.5 9.5l-4 4" stroke="#fff" /></Svg>
              删除
            </ToolBtn>
            <ToolBtn>
              <Svg s={15}><path d="M3 1H10L13 4V14H3Z" /><path d="M5 6h6M5 9h6M5 12h6" /></Svg>
              复制
            </ToolBtn>
            <ToolBtn>
              <Svg s={15} stroke={ORANGE}><path d="M1 5V14H10" /><path d="M3 3V12H12" /><rect x="5" y="1" width="10" height="9" fill="#bcd7f2" stroke={BLUE} /></Svg>
              层间复制
            </ToolBtn>
            <ToolMore>▸▸</ToolMore>
          </ListToolbar>
          <SearchRow>
            搜索构件...
            <Search size={12} color="#3b8fd8" strokeWidth={2.5} />
          </SearchRow>
          <TreeBody>
            <TreeRow $indent={10}><TreeCaret />柱</TreeRow>
            <TreeRow $indent={30}><TreeCaret />框架柱</TreeRow>
            {["A-A", "B-B", "C-C", "D-D", "E-E", "F-F", "G-G", "H-H", "G-G-1"].map((t, i) => (
              <TreeRow key={t} $indent={60}><TreeLeaf $selected={i === 0}>{t}</TreeLeaf></TreeRow>
            ))}
          </TreeBody>
        </PanelTop>
        <PanelBottom>
          <DockBar />
          <TabStrip $h={23}>
            <PanelTab $active>属性列表</PanelTab>
            <PanelTab>图层管理</PanelTab>
          </TabStrip>
          <PropHead>
            <PropHeadCell $blank />
            <PropHeadCell>属性名称</PropHeadCell>
            <PropHeadCell $sel>属性值</PropHeadCell>
          </PropHead>
          <PropBody>
            {PROPS.map(([n, v, o = {}], i) => (
              <PropRow key={i}>
                <PropNo $sel={o.sel}>{n ? i + 1 : ""}</PropNo>
                <PropName $plain={o.plain}>{n}</PropName>
                <PropValue $sel={o.sel} $fill={o.fill} $muted={o.muted}>{v}</PropValue>
              </PropRow>
            ))}
          </PropBody>
          <PropFoot><GhostBtn $w={80}>截面编辑</GhostBtn></PropFoot>
        </PanelBottom>
      </MidCol>

      <Viewport>
        <Scene />
        <FloatBar>
          <Svg s={32} stroke="none">
            <circle cx="14" cy="17" r="11" fill="#6d7378" />
            <circle cx="22" cy="10" r="5" fill="#4a4e52" stroke="#8a8f93" />
            <path d="M2 22c6 0 14-4 19-9" stroke="#2c2f33" fill="none" />
          </Svg>
          <Svg w={24} h={24}>
            <rect x="0.5" y="0.5" width="23" height="23" fill="#3f454d" stroke="#23262a" />
            <text x="12" y="21" fontSize="8" fill="#a0a4a8" stroke="none" fontFamily="Liberation Sans">2D</text>
          </Svg>
          <Svg w={24} h={24} stroke="#23262a">
            <path d="M0.5 6.5L6 1H23.5V18L18 23.5H0.5Z" fill="#6b7886" />
            <path d="M4.5 6.5H19V19H4.5Z M19 6.5L23.5 1M19 19L23.5 18M0.5 6.5H19" fill="#56616d" />
          </Svg>
          <FloatArrow />
          <Svg w={24} h={24} stroke="#23262a">
            <path d="M0.5 6.5L6 1H23.5V18L18 23.5H0.5Z" fill="#3f454d" />
            <path d="M0.5 6.5H18V23.5M18 6.5L23.5 1" />
          </Svg>
          <FloatArrow />
          <Svg w={24} h={24} stroke="#23262a" sw={2}>
            <path d="M19 6A10 10 0 1 0 22 13" />
            <path d="M15 6H21V1" />
          </Svg>
          <FloatArrow />
          <FloatRule />
          <Svg w={24} h={26} stroke="#23262a">
            <path d="M0.5 4L3 1H21L23.5 4V25.5H0.5Z" fill="#3f454d" />
            <path d="M0.5 4H23.5M6 9h3M15 9h3M6 14h3M15 14h3M6 19h3M15 19h3" />
          </Svg>
        </FloatBar>
        <Splitter />
      </Viewport>

      <RightPanel>
        <DockBar><X size={9} strokeWidth={3} /></DockBar>
        <RightTitle>显示设置</RightTitle>
        <RightTabs>
          <RightTab $active>图元显示</RightTab>
          <RightTab>楼层显示</RightTab>
        </RightTabs>
        <LayerBox>
          <LayerTable>
            <LayerHead>
              <LayerHeadCell>图层构件</LayerHeadCell>
              <LayerHeadCell>显示图元</LayerHeadCell>
              <LayerHeadCell>显示名称</LayerHeadCell>
            </LayerHead>
            {LAYERS.map(([n, g, s, last, nameState], i) => (
              <LayerRow key={i}>
                <LayerName $group={g} $last={last}>
                  {g ? <Minus /> : null}
                  {n}
                </LayerName>
                <CheckCell><Check $state={s}>{s === "on" ? <CheckMark /> : null}</Check></CheckCell>
                <CheckCell><Check $state={nameState || "off"} /></CheckCell>
              </LayerRow>
            ))}
          </LayerTable>
          <LayerScroll>
            <ScrollArrow $x={3} $y={2} $up />
            <LayerThumb />
            <ScrollArrow $x={3} $y={726} />
          </LayerScroll>
        </LayerBox>
        <RightFoot><GhostBtn $w={89}>恢复默认设置</GhostBtn></RightFoot>
      </RightPanel>
    </Main>

    <ScrollArrow $x={485} $y={971} />
    <Meter />

    <Dialog>
      <DialogTitle>
        错误 - 双击构件名称选择出错构件
        <DialogActions>
          <Maxi />
          <X size={13} strokeWidth={2.5} />
        </DialogActions>
      </DialogTitle>
      <ErrorBox>
        <ErrorTable>
          <ErrorHead>
            <ErrorHeadCell>类型</ErrorHeadCell>
            <ErrorHeadCell>构件名称</ErrorHeadCell>
            <ErrorHeadCell>所属楼层</ErrorHeadCell>
            <ErrorHeadCell>错误描述</ErrorHeadCell>
          </ErrorHead>
          {ERRORS.map((e, i) => (
            <ErrorRow key={i} $selected={i === 0}>
              <ErrType>
                <ErrDot $selected={i === 0}><X size={12} strokeWidth={2} /></ErrDot>
                错误
              </ErrType>
              <ErrName>{e}</ErrName>
              <ErrFloor>基础层</ErrFloor>
              <ErrDesc>直筋长度的计算结果小于0，计算公式为[850-983-20]</ErrDesc>
            </ErrorRow>
          ))}
        </ErrorTable>
        <ErrScroll><ErrThumb /></ErrScroll>
      </ErrorBox>
      <Grip />
    </Dialog>
    <RedFrame />
  </Page>
);

export default App;
